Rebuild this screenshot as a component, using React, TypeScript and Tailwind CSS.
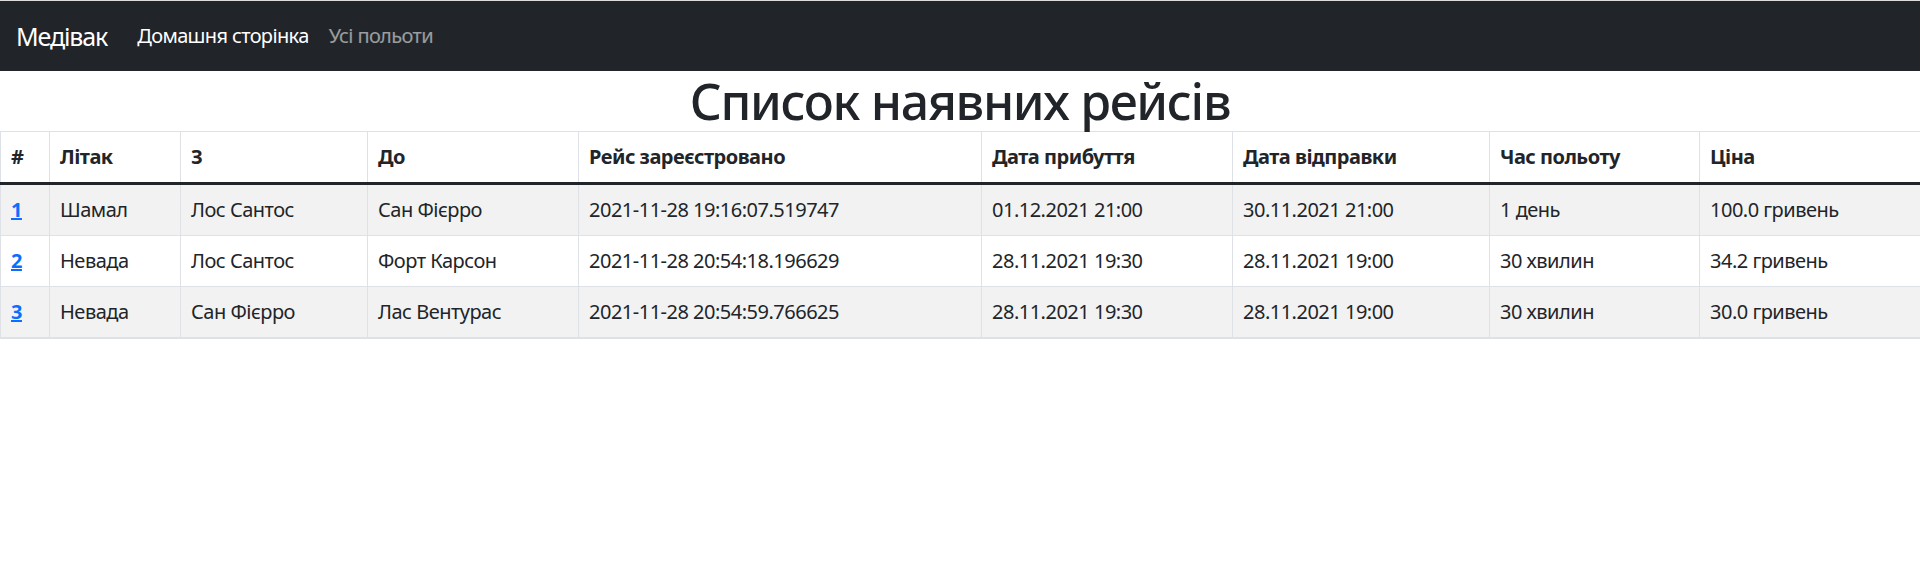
const columns = [
  { label: '#', cls: 'w-[49px]' },
  { label: 'Літак', cls: 'w-[131px]' },
  { label: 'З', cls: 'w-[187px]' },
  { label: 'До', cls: 'w-[211px]' },
  { label: 'Рейс зареєстровано', cls: 'w-[403px]' },
  { label: 'Дата прибуття', cls: 'w-[251px]' },
  { label: 'Дата відправки', cls: 'w-[257px]' },
  { label: 'Час польоту', cls: 'w-[210px]' },
  { label: 'Ціна', cls: 'w-[221px]' },
]

const flights = [
  {
    id: 1,
    plane: 'Шамал',
    from: 'Лос Сантос',
    to: 'Сан Фієрро',
    created: '2021-11-28 19:16:07.519747',
    arrival: '01.12.2021 21:00',
    departure: '30.11.2021 21:00',
    duration: '1 день',
    price: '100.0 гривень',
  },
  {
    id: 2,
    plane: 'Невада',
    from: 'Лос Сантос',
    to: 'Форт Карсон',
    created: '2021-11-28 20:54:18.196629',
    arrival: '28.11.2021 19:30',
    departure: '28.11.2021 19:00',
    duration: '30 хвилин',
    price: '34.2 гривень',
  },
  {
    id: 3,
    plane: 'Невада',
    from: 'Сан Фієрро',
    to: 'Лас Вентурас',
    created: '2021-11-28 20:54:59.766625',
    arrival: '28.11.2021 19:30',
    departure: '28.11.2021 19:00',
    duration: '30 хвилин',
    price: '30.0 гривень',
  },
]

export default function App() {
  return (
    <div className="min-h-[572px] bg-white text-[#212529] font-['Noto_Sans','Open_Sans',sans-serif]">
      {/* Navbar */}
      <nav className="h-[71px] bg-[#212529] border-t border-[#dcdcdc] flex items-center px-[16px]">
        <a href="#" className="text-[25px] text-white mr-[20px] leading-[37px] tracking-[-0.045em]">
          Медівак
        </a>
        <div className="flex items-center tracking-[-0.04em]">
          <a href="#" className="text-[20px] text-white px-[10px] leading-[30px]">
            Домашня сторінка
          </a>
          <a href="#" className="text-[20px] text-white/55 px-[10px] leading-[30px]">
            Усі польоти
          </a>
        </div>
      </nav>

      <h1 className="text-center text-[50px] leading-[60px] font-medium tracking-[-0.027em]">
        Список наявних рейсів
      </h1>

      <table className="w-full table-fixed border-collapse text-[20px] leading-[30px] tracking-[-0.025em]">
        <thead>
          <tr className="border-t border-b-[3px] border-t-[#dee2e6] border-b-[#212529]">
            {columns.map((c) => (
              <th
                key={c.label}
                className={`${c.cls} text-left font-bold px-[10px] py-[10px] border-x border-[#dee2e6]`}
              >
                {c.label}
              </th>
            ))}
          </tr>
        </thead>
        <tbody>
          {flights.map((f, i) => (
            <tr
              key={f.id}
              className={`border-[#dee2e6] ${i === flights.length - 1 ? 'border-b-2' : 'border-b'} ${
                i % 2 === 0 ? 'bg-[#f2f2f2]' : 'bg-white'
              }`}
            >
              <th className="text-left font-bold px-[10px] py-[10px] border-x border-[#dee2e6]">
                <a href="#" className="text-[#0d6efd] underline">
                  {f.id}
                </a>
              </th>
              {[f.plane, f.from, f.to, f.created, f.arrival, f.departure, f.duration, f.price].map((v, j) => (
                <td key={j} className="px-[10px] py-[10px] border-x border-[#dee2e6] whitespace-nowrap">
                  {v}
                </td>
              ))}
            </tr>
          ))}
        </tbody>
      </table>
    </div>
  )
}
